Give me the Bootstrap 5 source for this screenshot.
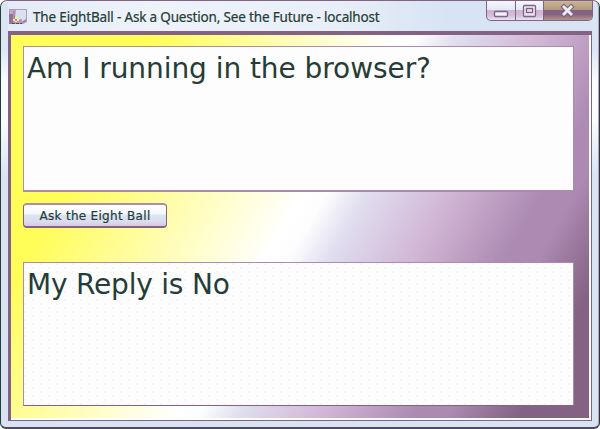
<!DOCTYPE html>
<html lang="en">
<head>
<meta charset="utf-8">
<meta name="viewport" content="width=device-width, initial-scale=1">
<title>The EightBall</title>
<link href="https://cdn.jsdelivr.net/npm/bootstrap@5.3.0/dist/css/bootstrap.min.css" rel="stylesheet">
<style>
:root{--plum:#846284;--mauve:#ac8ab2;--ink:#263c36}
body{background:#fff;color:var(--ink)}
.window-frame{width:600px;height:429px;background:linear-gradient(#d8e4f4 0,#dce7f5 50px,#fafcfd 80px,#fafcfd 120px,#d8e4f4 175px);border:1px solid var(--ink);border-top-color:var(--plum);border-bottom:2px solid #54485c;border-radius:7px 7px 6px 6px;box-shadow:inset 0 1px #fff,inset -1px 0 #b9a0c0;padding:0 7px 6px}
.title-strip{height:30px;background:linear-gradient(90deg,#e3ebf6,#eef3fa 25%,#e8eff8 55%,#d8e4f4 75%)}
.title-text{font:13.5px/18px "Noto Sans","Open Sans",sans-serif;letter-spacing:-.17px;margin:7px 0 0 6px;white-space:nowrap;-webkit-text-stroke:.2px var(--ink)}
.app-icon{margin:8px 0 0 1px}
.caption-buttons{height:20px;margin:0 -1px 0 0;border:1px solid var(--plum);border-radius:0 0 5px 5px;background:linear-gradient(#f4f7fb 0,#e2e8f4 46%,#cfb5d4 50%,#d3bcd8 75%,#e6e5f2);overflow:hidden}
.caption-buttons button{border:0;border-right:1px solid var(--plum);padding:0;background:none;display:flex}
.caption-buttons .close-btn{border-right:0;background:linear-gradient(#c9b795 0,#b1997c 45%,#846284 50%,#846284 70%,#b19685)}
.client-frame{border:3px solid var(--plum);border-top-width:4px;border-right:1px solid var(--plum);border-bottom:1px solid var(--plum);background:#fff;padding:0 2px 2px 0}
.ball-panel{background:linear-gradient(120deg,#fffd58 0,#fffd58 18%,#fffdb2 34%,#fff 48%,#fdfdfe 51%,#e0deef 56%,#d0b4d4 67%,#ac8ab2 78%,#ac8ab2 82%,#846284 91%);padding:11px 15px 12px 12px}
.ball-box{border:1px solid var(--mauve);border-radius:0;padding:1px 3px 0;font:28px/42px "DejaVu Sans",sans-serif;letter-spacing:-.06px;color:var(--ink);overflow:hidden;background:#fdfdfd}
.question-box{height:146px;border-bottom:2px solid var(--mauve)}
.reply-box{height:144px;letter-spacing:-.2px;border-bottom-color:var(--plum);background:radial-gradient(circle at 1px 1px,#e4edf8 .6px,transparent .8px) 0 0/16px 8px,radial-gradient(circle at 9px 5px,#e4edf8 .6px,transparent .8px) 0 0/16px 8px,#fdfdfd}
.ask-btn{width:144px;height:25px;margin:11px 0 34px;padding:0;border:1px solid var(--plum);border-top:2px solid var(--mauve);border-bottom:2px solid var(--plum);border-radius:4px;font:12px/20px "DejaVu Sans",sans-serif;letter-spacing:.3px;-webkit-text-stroke:.2px var(--ink);color:var(--ink);background:linear-gradient(#fff 0,#f5f8fc 40%,#dbe5f4 50%,#dbdcee 80%,#d8c8e0)}
</style>
<script src="https://cdn.jsdelivr.net/npm/bootstrap@5.3.0/dist/js/bootstrap.bundle.min.js"></script>
</head>
<body class="overflow-hidden">
<div class="window-frame d-flex flex-column overflow-hidden">
  <header class="title-strip d-flex align-items-start flex-shrink-0">
    <svg class="app-icon flex-shrink-0" width="18" height="17" viewBox="0 0 18 17">
      <path d="M0 0h18v13l-4 2H0z" fill="#b596bb"/>
      <path d="M7 1h10v9l-3 2-6-1-2-3z" fill="#d8e0f2"/>
      <path d="M1 1h5v6H1z" fill="#c4a6c9"/>
      <path d="M0 5h4v10H0z" fill="#94739a"/>
      <path d="M5 2v5l2 4h6M14 13l3-2" fill="none" stroke="#94739a"/>
      <path d="M6 8h2v2H6zM4 10h2v2H4zM8 10h2v2H8zM6 12h2v1H6z" fill="#fff266"/>
      <path d="M3 14.5h10" stroke="#54485c" stroke-dasharray="3 1"/>
    </svg>
    <div class="title-text flex-grow-1">The EightBall - Ask a Question, See the Future - localhost</div>
    <div class="caption-buttons d-flex flex-shrink-0 border-top-0">
      <button type="button" aria-label="Minimize"><svg width="28" height="20"><rect x="7.5" y="10.5" width="13" height="5" rx="1" fill="#eef2fa" stroke="#846284" stroke-width="1.4"/></svg></button>
      <button type="button" aria-label="Maximize"><svg width="27" height="20"><rect x="7.5" y="4.5" width="12" height="11" rx="1" fill="#e9e4f1" stroke="#846284" stroke-width="1.3"/><rect x="10.5" y="7.5" width="6" height="4" fill="#e8dff0" stroke="#846284" stroke-width="1.3"/></svg></button>
      <button type="button" class="close-btn" aria-label="Close"><svg width="48" height="20"><path d="M20 6l7 7M27 6l-7 7" stroke="#846284" stroke-width="5" stroke-linecap="square"/><path d="M20 6l7 7M27 6l-7 7" stroke="#e8edf8" stroke-width="2.8" stroke-linecap="square"/></svg></button>
    </div>
  </header>
  <main class="client-frame flex-grow-1 d-flex">
    <div class="ball-panel flex-grow-1 d-flex flex-column align-items-start">
      <div class="ball-box question-box form-control flex-shrink-0">Am I running in the browser?</div>
      <button type="button" class="btn ask-btn flex-shrink-0">Ask the Eight Ball</button>
      <div class="ball-box reply-box form-control flex-shrink-0">My Reply is No</div>
    </div>
  </main>
</div>
</body>
</html>
